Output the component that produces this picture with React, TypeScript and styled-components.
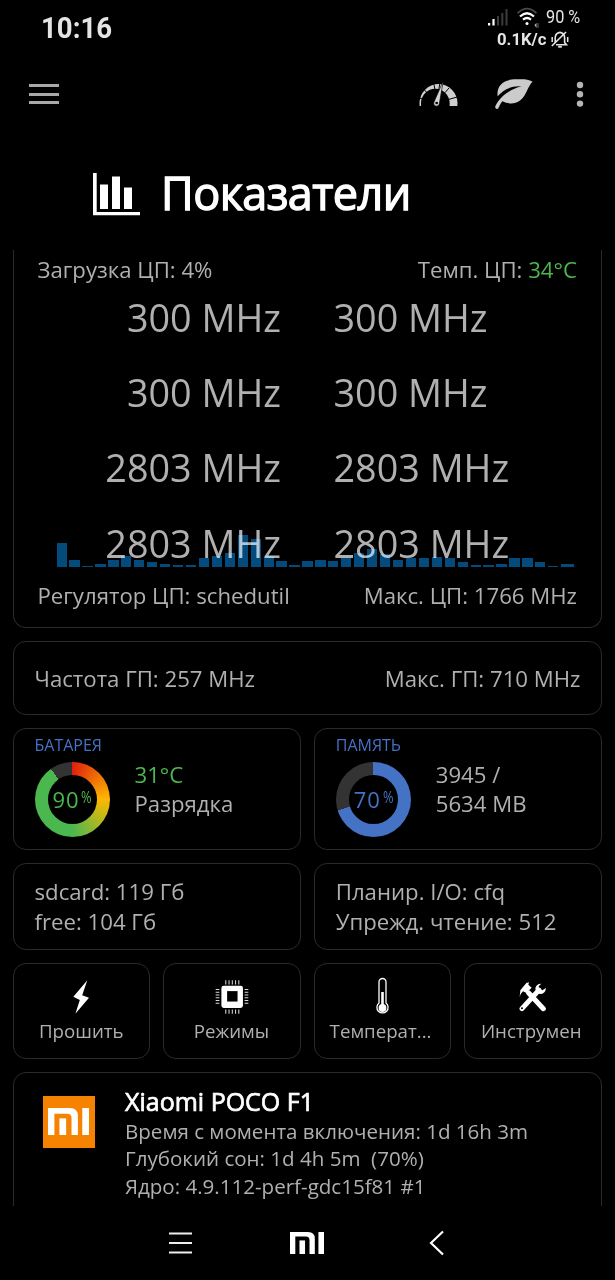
import React from "react";
import styled, { createGlobalStyle } from "styled-components";

const GlobalStyle = createGlobalStyle`
  * { box-sizing: border-box; }
  body {
    margin: 0;
    background: #000;
    font-family: "Open Sans", "Noto Sans", sans-serif;
    color: #b0b0b0;
  }
`;

const Screen = styled.div`
  width: 615px;
  height: 1280px;
  display: flex;
  flex-direction: column;
  overflow: hidden;
  background: #000;
`;

const StatusBar = styled.header`
  height: 58px;
  flex: none;
  display: flex;
  justify-content: space-between;
  padding: 6px 34px 0 41px;
  font-family: Roboto, sans-serif;
  color: #e6e6e6;
`;

const Clock = styled.div`
  font-size: 29.5px;
  font-weight: 700;
  line-height: 45px;
  transform: scaleX(0.935);
  transform-origin: left;
  color: #e4e4e4;
`;

const StatusInfo = styled.div`
  display: flex;
  flex-direction: column;
`;

const StatusLine = styled.div<{ $pad?: number }>`
  display: flex;
  align-items: center;
  height: 22px;
  padding-left: ${(p) => p.$pad ?? 0}px;
`;

const StatusText = styled.span<{ $w: number; $bold?: boolean; $scale: number; $size: number }>`
  display: block;
  width: ${(p) => p.$w}px;
  white-space: nowrap;
  font-size: ${(p) => p.$size}px;
  font-weight: ${(p) => (p.$bold ? 700 : 400)};
  transform: scaleX(${(p) => p.$scale});
  transform-origin: left;
`;

const Spacer = styled.span<{ $w: number }>`
  flex: none;
  width: ${(p) => p.$w}px;
`;

const Toolbar = styled.div`
  height: 72px;
  flex: none;
  display: flex;
  align-items: center;
  padding: 0 31px 0 29px;
`;

const MenuIcon = styled.div`
  width: 30px;
  height: 20px;
  display: flex;
  flex-direction: column;
  justify-content: space-between;
  margin-right: auto;
  span { height: 3px; background: #a8a8a8; }
`;

const Title = styled.h1`
  height: 120px;
  flex: none;
  margin: 0;
  display: flex;
  align-items: center;
  gap: 21px;
  padding: 5px 0 0 93px;
  font-size: 45px;
  font-weight: 400;
  letter-spacing: -0.6px;
  -webkit-text-stroke: 1.3px #fff;
  color: #fff;
  white-space: nowrap;
  svg { margin-top: 4px; }
`;

const Content = styled.main`
  height: 956px;
  flex: none;
  overflow: hidden;
  display: flex;
  flex-direction: column;
  gap: 13px;
  padding: 0 13px 0 12.5px;
`;

const Card = styled.section<{ $h: number }>`
  position: relative;
  flex: none;
  height: ${(p) => p.$h}px;
  border: 1.5px solid #2a2a2a;
  border-radius: 13px;
  min-width: 0;
`;

const CpuCard = styled(Card)`
  border-top: 0;
  border-radius: 0 0 13px 13px;
  padding: 5px 24px 0;
  display: flex;
  flex-direction: column;
`;

const SplitLine = styled.div`
  display: flex;
  justify-content: space-between;
  font-size: 22.2px;
  line-height: 30px;
  white-space: pre;
`;

const Green = styled.span`
  color: #4bb84f;
`;

const Cores = styled.div`
  display: grid;
  grid-template-columns: 243.5px 1fr;
  column-gap: 52.5px;
  grid-auto-rows: 75.2px;
  height: 296px;
  font-size: 37.75px;
  line-height: 66px;
  white-space: nowrap;
  span:nth-child(odd) { text-align: right; }
`;

const LoadChart = styled.div`
  position: absolute;
  left: 43px;
  top: 281.5px;
  height: 35px;
  display: flex;
  align-items: flex-end;
  gap: 2.65px;
  mix-blend-mode: screen;
`;

const LoadBar = styled.i`
  width: 10.3px;
  background: #034a7d;
  &:last-child { width: 13px; }
`;

const GpuCard = styled(Card)`
  padding: 22px 20.5px 0 21px;
`;

const Row = styled.div`
  flex: none;
  display: flex;
  gap: 13px;
  > * { flex: 1 1 0; }
`;

const MeterCard = styled(Card)`
  padding: 5px 21px;
`;

const MeterLabel = styled.div`
  font-size: 16px;
  line-height: 23px;
  color: #4472c4;
`;

const MeterBody = styled.div`
  display: flex;
  gap: 25px;
  padding-top: 5px;
`;

const Ring = styled.div<{ $fill: string }>`
  width: 75px;
  height: 75px;
  border-radius: 50%;
  background: ${(p) => p.$fill};
  display: flex;
  align-items: center;
  justify-content: center;
`;

const RingHole = styled.div<{ $color: string }>`
  width: 49px;
  height: 49px;
  border-radius: 50%;
  background: #000;
  color: ${(p) => p.$color};
  display: flex;
  align-items: center;
  padding-left: 5px;
  font-size: 22px;
  line-height: 30px;
  letter-spacing: 0.9px;
`;

const Percent = styled.small`
  font-size: 16px;
  line-height: 20px;
  margin-top: -5px;
  margin-left: 2px;
  transform: scaleX(0.8);
  transform-origin: left;
`;

const Lines = styled.div<{ $lh?: number; $size?: number }>`
  font-size: ${(p) => p.$size ?? 22.2}px;
  line-height: ${(p) => p.$lh ?? 29.5}px;
  white-space: pre;
`;

const MeterLines = styled(Lines)`
  margin-top: -2px;
`;

const StorageCard = styled(Card)`
  padding: 13.5px 21px 0;
`;

const Tool = styled(Card)`
  display: flex;
  flex-direction: column;
  align-items: center;
  font-size: 18.7px;
  line-height: 26px;
  white-space: nowrap;
  padding-top: 13px;
  gap: 1px;
`;

const ToolLabel = styled.span<{ $shift?: number }>`
  margin-right: ${(p) => p.$shift ?? 0}px;
`;

const ToolIcon = styled.span`
  height: 40px;
  display: flex;
  align-items: center;
  justify-content: center;
`;

const DeviceCard = styled(Card)`
  padding: 12px 0 0 29px;
  display: flex;
  gap: 30px;
`;

const Logo = styled.div`
  width: 52px;
  height: 52px;
  margin: 11px 0.5px 0 0;
  background: #f58200;
  display: flex;
  align-items: center;
  justify-content: center;
`;

const DeviceName = styled.h2`
  margin: 0;
  font-size: 25px;
  font-weight: 400;
  -webkit-text-stroke: 0.7px #fff;
  line-height: 33px;
  color: #fff;
`;

const NavBar = styled.nav`
  flex: 1;
  display: flex;
  align-items: center;
  padding-left: 168px;
`;

const loads = [
  24, 6.7, 0.6, 2.7, 6.7, 10.7, 6.7, 4.7, 2.7, 1.3, 1.3, 8.7, 10.7, 14, 32, 28, 11, 6, 1.4, 5.7,
  6.7, 5.7, 9, 14, 18, 13, 6.7, 9, 9, 9.7, 9, 4.7, 1.3, 1.3, 2.7, 9, 9, 4.7, 1, 2.7,
];

const cores = ["300", "300", "300", "300", "2803", "2803", "2803", "2803"];

const MiMark = ({ w, h }: { w: number; h: number }) => (
  <svg width={w} height={h} viewBox="0 0 122 81" preserveAspectRatio="none" fill="#fff">
    <path d="M0 0H65Q89 0 89 24V81H70V30Q70 17 57 17H19V81H0Z" />
    <rect x="34" y="31" width="20" height="50" />
    <rect x="102" width="20" height="81" />
  </svg>
);

const Signal = () => (
  <svg width="22" height="18" viewBox="0 0 22 18">
    <path d="M0 15h2.200v2.500H0zM4.400 11h2.200v6.500H4.400z" fill="#fff" />
    <path d="M9 8h2v9.500H9zM13.300 5h2v12.500h-2zM17.500 1h2v16.500h-2z" fill="#3c3c3c" />
  </svg>
);

const Wifi = () => (
  <svg width="24" height="21" viewBox="0 0 24 21" fill="none">
    <path d="M0.500 6.200Q10 -3 19.500 6.200" stroke="#4a4a4a" strokeWidth="1.800" />
    <path d="M3 9.500Q10 3 17 9.500M6 12.700Q10 9.300 14 12.700" stroke="#fff" strokeWidth="2.200" />
    <circle cx="10" cy="16.500" r="1.500" fill="#fff" />
    <path d="M17.500 18l2-2v5z" fill="#bbb" />
    <path d="M21 16v5" stroke="#555" strokeWidth="1.200" />
  </svg>
);

const BellOff = () => (
  <svg width="18" height="17" viewBox="0 0 18 17" fill="none" stroke="#e6e6e6" strokeWidth="1.600">
    <path d="M4.200 12V7Q4.200 2 9 1.400Q13.600 2 13.600 7V11.500l1.800 2.200H5" />
    <path d="M0.800 15L15 1" />
    <path d="M7.200 15.800h3.600" strokeWidth="1.800" />
    <path d="M1.200 6v5M16.700 6v5" strokeWidth="1.500" />
  </svg>
);

const Gauge = () => (
  <svg width="39" height="28" viewBox="58 48 117 84">
    <clipPath id="dial">
      <rect x="58" y="48" width="117" height="78" />
    </clipPath>
    <path
      clipPath="url(#dial)"
      fillRule="evenodd"
      fill="#cfcfcf"
      d="M59.500 118a57 58 0 1 0 114 0a57 58 0 1 0-114 0M64 119a43 45 0 1 1 86 0a43 45 0 1 1-86 0"
    />
    <path
      d="M60 102l14 5M74 77l11 13M102 56l4 22M148 72l-12 14M176 98l-28 8M121 56l-4 22"
      stroke="#000"
      strokeWidth="3"
    />
    <path d="M131 50L103 114a8.500 8.500 0 1 0 16 5Z" fill="#d4d4d4" stroke="#000" strokeWidth="2" />
    <circle cx="111" cy="117" r="4" fill="#000" />
  </svg>
);

const Leaf = () => (
  <svg width="38" height="32" viewBox="286 40 114 96">
    <path
      fill="#cbcbcb"
      d="M294 95C290 65 308 44 350 44C372 43 384 43 399 51C385 62 382 90 362 107C345 120 325 118 308 110C302 117 300 124 296 131C291 136 285 131 287 125C300 96 330 74 366 65C335 62 310 76 294 95Z"
    />
  </svg>
);

const Dots = () => (
  <svg width="8" height="28" viewBox="0 0 8 28" fill="#b4b4b4">
    <circle cx="4" cy="5" r="3.200" />
    <circle cx="4" cy="14.300" r="3.200" />
    <circle cx="4" cy="23.600" r="3.200" />
  </svg>
);

const Chart = () => (
  <svg width="47" height="43" viewBox="0 0 47 43" fill="#fff">
    <path d="M0 0h3.700v39H47v3.300H0zM7 11.500h8V36H7zM19 3.500h8V36h-8zM31 14.500h8V36h-8z" />
  </svg>
);

const Bolt = () => (
  <svg width="16" height="34" viewBox="221 77 47 99" fill="#fff">
    <path d="M263 77L222 126L241 135L228 176L268 129L248 121Z" />
  </svg>
);

const Chip = () => (
  <svg width="34" height="34" viewBox="645 77 101 101">
    <rect x="664" y="94" width="64" height="66" rx="7" fill="#fff" />
    <rect x="681" y="110" width="31" height="31" fill="#000" />
    <g stroke="#ddd" strokeWidth="3">
      {[0, 1, 2, 3, 4].map((i) => {
        const x = 677 + i * 9.7;
        return <path key={x} d={`M${x} 78v12M${x} 165v12`} />;
      })}
      {[0, 1, 2, 3, 4, 5].map((i) => {
        const y = 105 + i * 8.2;
        return <path key={y} d={`M647 ${y}h11M733 ${y}h11`} />;
      })}
    </g>
  </svg>
);

const Thermometer = () => (
  <svg width="13" height="39" viewBox="0 0 13 39" fill="none" stroke="#fff">
    <path d="M3 26V5a3.500 3.500 0 0 1 7 0V26a5.600 5.600 0 1 1-7 0Z" strokeWidth="1.300" />
    <circle cx="6.500" cy="31" r="3.900" fill="#fff" stroke="none" />
    <path d="M6.500 15v14" strokeWidth="2.600" />
  </svg>
);

const Tools = () => (
  <svg width="28" height="30" viewBox="643 83 84 90">
    <path d="M716 163L672 116" stroke="#fff" strokeWidth="15" strokeLinecap="round" />
    <path d="M645 128L647 108L665 86L673 84L671 91L681 100L665 116L655 111Q648 117 645 128Z" fill="#fff" />
    <path d="M652 163L703 107" stroke="#fff" strokeWidth="14.500" strokeLinecap="round" />
    <path d="M710 88Q694 88 692 102L695 115L706 119Q722 119 724 101L713 108L703 103L702 96Z" fill="#fff" />
    <circle cx="652" cy="162" r="3" fill="#000" />
  </svg>
);

export default function App() {
  return (
    <>
      <GlobalStyle />
      <Screen>
        <StatusBar>
          <Clock>10:16</Clock>
          <StatusInfo>
            <StatusLine>
              <Signal />
              <Spacer $w={7} />
              <Wifi />
              <Spacer $w={5} />
              <StatusText $w={35} $size={17.5} $scale={0.93}>90 %</StatusText>
            </StatusLine>
            <StatusLine $pad={9}>
              <StatusText $w={54} $size={17} $bold $scale={0.98}>0.1K/c</StatusText>
              <BellOff />
            </StatusLine>
          </StatusInfo>
        </StatusBar>
        <Toolbar>
          <MenuIcon><span /><span /><span /></MenuIcon>
          <Gauge />
          <Spacer $w={37} />
          <Leaf />
          <Spacer $w={43} />
          <Dots />
        </Toolbar>
        <Title>
          <Chart />
          Показатели
        </Title>
        <Content>
          <CpuCard $h={378}>
            <SplitLine>
              <span>Загрузка ЦП: 4%</span>
              <span>Темп. ЦП: <Green>34°C</Green></span>
            </SplitLine>
            <Cores>
              {cores.map((f, i) => <span key={i}>{f} MHz</span>)}
            </Cores>
            <SplitLine>
              <span>Регулятор ЦП: schedutil</span>
              <span>Макс. ЦП: 1766 MHz</span>
            </SplitLine>
            <LoadChart>
              {loads.map((h, i) => <LoadBar key={i} style={{ height: h }} />)}
            </LoadChart>
          </CpuCard>
          <GpuCard $h={73.5}>
            <SplitLine>
              <span>Частота ГП: 257 MHz</span>
              <span>Макс. ГП: 710 MHz</span>
            </SplitLine>
          </GpuCard>
          <Row>
            <MeterCard $h={122}>
              <MeterLabel>БАТАРЕЯ</MeterLabel>
              <MeterBody>
                <Ring $fill="conic-gradient(#e0200c 0deg, #fdb800 90deg, #4bb84f 180deg, #4bb84f 325deg, #333 325deg)">
                  <RingHole $color="#4bb84f">90<Percent>%</Percent></RingHole>
                </Ring>
                <MeterLines><Green>31°C</Green>{"\n"}Разрядка</MeterLines>
              </MeterBody>
            </MeterCard>
            <MeterCard $h={122}>
              <MeterLabel>ПАМЯТЬ</MeterLabel>
              <MeterBody>
                <Ring $fill="conic-gradient(#4472c4 253deg, #333 253deg)">
                  <RingHole $color="#4472c4">70<Percent>%</Percent></RingHole>
                </Ring>
                <MeterLines>{"3945 /\n5634 MB"}</MeterLines>
              </MeterBody>
            </MeterCard>
          </Row>
          <Row>
            <StorageCard $h={87}><Lines>{"sdcard: 119 Гб\nfree: 104 Гб"}</Lines></StorageCard>
            <StorageCard $h={87}><Lines>{"Планир. I/O: cfq\nУпрежд. чтение: 512"}</Lines></StorageCard>
          </Row>
          <Row>
            <Tool $h={96}><ToolIcon><Bolt /></ToolIcon><ToolLabel>Прошить</ToolLabel></Tool>
            <Tool $h={96}><ToolIcon><Chip /></ToolIcon><ToolLabel $shift={1}>Режимы</ToolLabel></Tool>
            <Tool $h={96}><ToolIcon><Thermometer /></ToolIcon><ToolLabel $shift={4}>Температ...</ToolLabel></Tool>
            <Tool $h={96}><ToolIcon><Tools /></ToolIcon><ToolLabel $shift={4}>Инструмен</ToolLabel></Tool>
          </Row>
          <DeviceCard $h={180}>
            <Logo><MiMark w={41} h={27} /></Logo>
            <div>
              <DeviceName>Xiaomi POCO F1</DeviceName>
              <Lines $size={20.55} $lh={27.5}>
                {"Время с момента включения: 1d 16h 3m\nГлубокий сон: 1d 4h 5m  (70%)\nЯдро: 4.9.112-perf-gdc15f81 #1"}
              </Lines>
            </div>
          </DeviceCard>
        </Content>
        <NavBar>
          <svg width="24" height="22" viewBox="0 0 24 22" stroke="#eee" strokeWidth="2">
            <path d="M1 1.500h23M1 11h23M1 20.500h23" />
          </svg>
          <Spacer $w={98} />
          <MiMark w={34} h={22} />
          <Spacer $w={105} />
          <svg width="15" height="26" viewBox="0 0 15 26" fill="none" stroke="#fff" strokeWidth="2.200">
            <path d="M14 1.500L2 13L14 24.500" />
          </svg>
        </NavBar>
      </Screen>
    </>
  );
}
